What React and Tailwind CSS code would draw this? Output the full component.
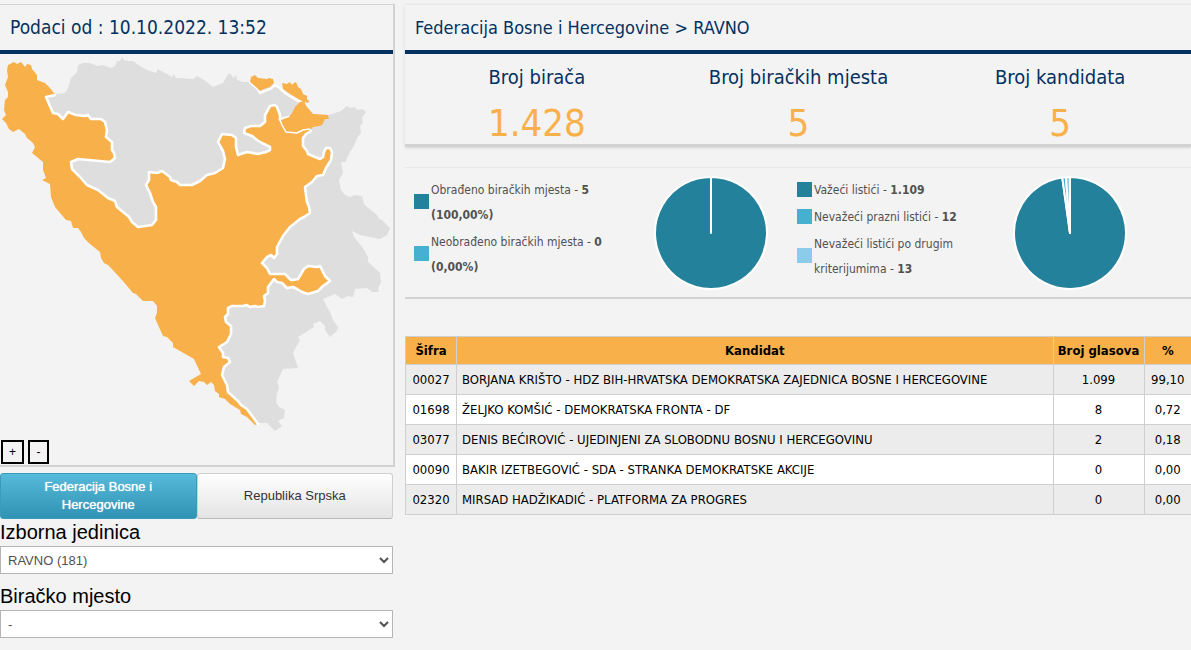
import React from "react";

const candidates = [
  ["00027", "BORJANA KRIŠTO - HDZ BIH-HRVATSKA DEMOKRATSKA ZAJEDNICA BOSNE I HERCEGOVINE", "1.099", "99,10"],
  ["01698", "ŽELJKO KOMŠIĆ - DEMOKRATSKA FRONTA - DF", "8", "0,72"],
  ["03077", "DENIS BEĆIROVIĆ - UJEDINJENI ZA SLOBODNU BOSNU I HERCEGOVINU", "2", "0,18"],
  ["00090", "BAKIR IZETBEGOVIĆ - SDA - STRANKA DEMOKRATSKE AKCIJE", "0", "0,00"],
  ["02320", "MIRSAD HADŽIKADIĆ - PLATFORMA ZA PROGRES", "0", "0,00"],
];

const stats = [
  ["Broj birača", "1.428"],
  ["Broj biračkih mjesta", "5"],
  ["Broj kandidata", "5"],
];

// Each legend entry is a list of lines: [plain text, bold value]
const stationLegend = [
  { color: "bg-[#24819b]", lines: [["Obrađeno biračkih mjesta - ", "5"], ["", "(100,00%)"]] },
  { color: "bg-[#46b0d0]", lines: [["Neobrađeno biračkih mjesta - ", "0"], ["", "(0,00%)"]] },
];

const ballotLegend = [
  { color: "bg-[#24819b]", lines: [["Važeći listići - ", "1.109"]] },
  { color: "bg-[#46b0d0]", lines: [["Nevažeći prazni listići - ", "12"]] },
  { color: "bg-[#8accea]", lines: [["Nevažeći listići po drugim", ""], ["kriterijumima - ", "13"]] },
];

const stationSlices = [{ color: "#24819b", value: 5 }];
const ballotSlices = [
  { color: "#24819b", value: 1109 },
  { color: "#46b0d0", value: 12 },
  { color: "#8accea", value: 13 },
];

// Outer borders
const westCoast =
  "55,94 53,92 50,88 45,83 37,80 37,75 32,69 31,65 27,64 25,67 21,62 17,64 14,62 8,65 7,70 8,77 5,85 8,92 8,97 5,100 4,110 6,115 2,119 6,123 9,129 13,132 19,129 25,134 27,138 33,143 35,147 32,153 43,162 43,170 46,178 42,180 50,184 51,197 55,207 66,220 71,221 73,228 78,228 81,232 84,238 90,244 100,252 101,258 104,263 108,265 110,267 122,280 133,293 136,294 143,301 153,301 157,306 157,313 155,318 163,336 167,337 173,343 173,347 194,359 201,374 189,381 194,386 199,381 204,382 207,385 211,382 214,385 215,391 219,394 219,397 225,399 230,404 240,410 241,414 247,417 255,425 258,424";
const northEast =
  "30,100 55,94 65,93 68,88 71,78 77,72 78,65 83,63 90,63 97,66 103,65 111,68 115,66 117,61 120,61 122,57 124,60 128,61 133,61 140,66 147,70 156,73 158,69 161,71 167,74 172,77 174,74 176,78 180,78 193,79 197,76 204,80 213,87 223,83 228,74 231,74 233,78 236,75 237,80 243,82 250,82 262,87 274,84 283,90 298,101 304,103 313,114 328,115 335,113 341,111 347,106 350,108 355,107 357,110 363,109 366,112 362,118 363,123 360,126 361,133 357,138 354,146 350,152 346,160 346,162 341,162 343,173 339,180 341,190 345,195 350,197 355,195 362,196 364,204 367,207 377,215 379,219 382,220 390,228 387,235 380,239 370,237 360,235 352,231 354,237 363,248 368,257 368,262 380,273 381,283 378,288 379,292 372,292 367,288 355,289 353,297 348,296 342,299 335,294 323,299 327,307 330,312 333,320 338,327 337,331 330,337 325,330 325,326 320,321 313,324 314,327 298,337 300,340 296,347 293,353 298,368 283,369 277,382 279,387 277,394 276,402 279,407 285,410 284,418 278,421 282,426 275,431 267,423 259,423 240,408 222,385 214,370 150,290 90,215";

// Borders between the two entities
const eastBorder =
  "258,424 247,409 241,405 238,401 228,392 227,385 222,375 224,367 230,362 228,358 223,357 223,353 219,347 227,342 231,334 231,326 226,322 225,317 228,314 228,308 232,306 243,306 247,305 250,307 255,306 258,307 264,306 265,301 264,296 268,293 268,287 274,279 277,282 282,283 287,288 293,287 297,289 302,292 308,294 318,291 323,286 330,281 325,276 322,270 320,266 317,267 308,266 304,269 298,279 293,280 291,280 285,274 270,274 267,268 262,263 267,257 271,255 274,258 277,254 277,247 283,236 290,227 300,219 304,217 310,213 309,207 307,202 306,195 305,187 312,182 317,176 323,175 326,168 331,160 332,152 330,148 326,148 324,152 323,157 320,159 315,157 308,154 307,151 303,146 303,138 306,134 311,131";
const innerLobe = "311,131 309,129 303,130 297,133 286,132 282,125 280,120";
const westBorder =
  "280,120 280,115 277,107 275,105 270,106 265,115 265,122 260,126 251,126 245,128 244,133 252,136 257,140 262,143 270,147 270,150 266,152 258,154 247,152 238,155 236,147 236,138 232,135 222,134 218,142 223,151 225,159 223,168 215,173 207,175 200,181 192,185 180,185 177,182 171,180 170,177 162,171 157,173 149,172 149,180 146,185 150,193 153,202 156,207 156,220 152,225 138,227 132,222 129,217 117,207 115,201 108,198 98,190 87,185 80,177 72,169 71,162 78,159 110,162 115,158 114,153 112,150 112,142 106,137 107,130 105,122 101,119 91,119 88,115 85,116 76,115 68,112 63,119 58,114 53,113 46,97 55,95";
const brckoLobe =
  "311,129 313,127 319,126 322,125 325,119 329,119 328,115 313,114 306,106 304,101 300,102 295,107 292,113 289,117 281,120 282,125 286,132 297,133 303,130";

function RegionMap() {
  return (
    <svg viewBox="0 54 393 386" className="block w-full" role="img" aria-label="Bosna i Hercegovina">
      <polygon points={northEast} fill="#dedede" />
      <polygon points={`${westCoast} ${eastBorder} ${innerLobe} ${westBorder}`} fill="#f8b04a" />
      <g fill="none" stroke="#fff" strokeWidth="2.6" strokeLinejoin="round" strokeLinecap="round">
        <polyline points={eastBorder} />
        <polyline points={westBorder} />
        <polyline points="250,82 258,89 260,93 264,91 270,89 275,85 280,88 285,93 298,101 301,101" />
        <polyline points="289,117 281,119" />
      </g>
      <polygon points={brckoLobe} fill="#f8b04a" />
      <polyline points={innerLobe} fill="none" stroke="#fff" strokeWidth="1.5" />
      <g fill="#f8b04a">
        <polygon points="250,82 251,77 255,75 258,78 267,79 269,78 273,79 274,83 270,87 264,89 260,91 256,87" />
        <polygon points="282,83 287,84 290,82 292,85 294,83 296,82 298,87 301,89 303,94 307,96 307,99 309,101 308,103 304,102 300,100 290,94 283,89" />
      </g>
    </svg>
  );
}

function polar(angle, r) {
  const a = (angle * Math.PI) / 180;
  return [57 + r * Math.sin(a), 57 - r * Math.cos(a)];
}

function Pie({ slices, label }) {
  const total = slices.reduce((sum, s) => sum + s.value, 0);
  let angle = 0;
  const shapes = slices.map((s) => {
    const from = angle;
    angle += (s.value / total) * 360;
    const [x1, y1] = polar(from, 56);
    const [x2, y2] = polar(Math.min(angle, 359.99), 56);
    const large = angle - from > 180 ? 1 : 0;
    return { color: s.color, d: `M57 57L${x1} ${y1}A56 56 0 ${large} 1 ${x2} ${y2}Z` };
  });
  return (
    <svg viewBox="0 0 114 114" className="block size-[114px] shrink-0" role="img" aria-label={label}>
      {shapes.map((s) => (
        <path key={s.color} d={s.d} fill={s.color} stroke="#fff" strokeWidth="2" strokeLinejoin="round" />
      ))}
    </svg>
  );
}

function Legend({ items }) {
  return (
    <ul className="flex flex-col gap-[2px] pt-[2px] text-xs leading-[25px] text-[#515151]">
      {items.map((item) => (
        <li key={item.lines[0][0]} className="flex items-center gap-[2px]">
          <span className={`mb-[3px] size-[15px] shrink-0 ${item.color}`} />
          <span>
            {item.lines.map(([text, value]) => (
              <span key={text + value} className="block">
                {text}
                {value && <b>{value}</b>}
              </span>
            ))}
          </span>
        </li>
      ))}
    </ul>
  );
}

function Field({ id, label, value }) {
  return (
    <div className="flex flex-col">
      <label htmlFor={id} className="text-xl leading-[27px] text-black">
        {label}
      </label>
      <select id={id} className="h-7 w-full border border-[#b5b5b5] bg-white px-[3px] text-[13px] text-[#515151]">
        <option>{value}</option>
      </select>
    </div>
  );
}

export default function App() {
  return (
    <div className="flex min-h-screen flex-col gap-[10px] overflow-x-hidden bg-[#f3f3f3] pt-1 font-['DejaVu_Sans_Condensed','DejaVu_Sans',sans-serif] md:flex-row">
      <aside className="w-full shrink-0 md:w-[395px]">
        <section className="border-t border-r-2 border-b-2 border-[#d2d2d2]">
          <h1 className="border-b-4 border-[#04315f] pl-[10px] text-[19px] leading-[45px] text-[#04315f]">
            Podaci od : 10.10.2022. 13:52
          </h1>
          <RegionMap />
          <div className="flex gap-1 pb-px pl-px font-['Liberation_Sans',sans-serif] text-xs text-black">
            <button type="button" className="h-6 w-[23px] border-2 border-black">+</button>
            <button type="button" className="h-6 w-[21px] border-2 border-black">-</button>
          </div>
        </section>
        <div className="mt-[6px] pr-[2px] font-['Liberation_Sans',sans-serif]">
          <div className="grid grid-cols-2 text-[13px] leading-[18px]">
            <button
              type="button"
              className="h-[46px] rounded-[3px] border border-[#3a9cbb] bg-linear-to-b from-[#56badb] to-[#3093b3] px-10 text-white [text-shadow:0_0_1px_#ffffff]"
            >
              Federacija Bosne i Hercegovine
            </button>
            <button
              type="button"
              className="h-[46px] rounded-[3px] border border-[#cfcfcf] border-b-[#b8b8b8] bg-linear-to-b from-white to-[#e4e4e4] px-8 text-[#333]"
            >
              Republika Srpska
            </button>
          </div>
          <div className="flex flex-col gap-[9px]">
            <Field id="unit" label="Izborna jedinica" value="RAVNO (181)" />
            <Field id="station" label="Biračko mjesto" value="-" />
          </div>
        </div>
      </aside>

      <main className="min-w-0 flex-1">
        <section className="border-t border-b-3 border-t-[#e8e8e8] border-b-[#d2d2d2] text-[#04315f] shadow-sm">
          <h2 className="border-b-4 border-[#04315f] pl-[10px] text-lg leading-[45px]">
            Federacija Bosne i Hercegovine &gt; RAVNO
          </h2>
          <dl className="grid grid-cols-3 pl-px text-center">
            {stats.map(([label, value]) => (
              <div key={label}>
                <dt className="text-xl leading-[46px]">{label}</dt>
                <dd className="pt-[2px] text-[38px] leading-[42px] text-[#f8b04a]">{value}</dd>
              </div>
            ))}
          </dl>
        </section>

        <section className="mt-5 grid grid-cols-[249fr_143fr_216fr_178fr] border-t border-b-2 border-t-[#e8e8e8] border-b-[#d2d2d2] pt-2 pb-[7px]">
          <div className="pl-[9px]">
            <Legend items={stationLegend} />
          </div>
          <Pie label="Biračka mjesta" slices={stationSlices} />
          <Legend items={ballotLegend} />
          <Pie label="Listići" slices={ballotSlices} />
        </section>

        <table className="mt-[37px] w-full table-fixed border-collapse border border-r-0 border-[#cfcfcf] text-[13px] text-black">
          <colgroup>
            <col className="w-[51px]" />
            <col />
            <col className="w-[91px]" />
            <col className="w-[47px]" />
          </colgroup>
          <thead>
            <tr className="h-7 bg-[#f8b04a]">
              <th className="border-r border-[#cfcfcf]">Šifra</th>
              <th className="border-r border-[#cfcfcf]">Kandidat</th>
              <th className="border-r border-[#cfcfcf] whitespace-nowrap">Broj glasova</th>
              <th>%</th>
            </tr>
          </thead>
          <tbody>
            {candidates.map(([code, name, votes, share]) => (
              <tr key={code} className="h-[30px] border-t border-[#cfcfcf] odd:bg-[#ececec] even:bg-white">
                <td className="border-r border-[#cfcfcf] text-center">{code}</td>
                <td className="border-r border-[#cfcfcf] px-[5px]">{name}</td>
                <td className="border-r border-[#cfcfcf] text-center">{votes}</td>
                <td className="text-center">{share}</td>
              </tr>
            ))}
          </tbody>
        </table>
      </main>
    </div>
  );
}
